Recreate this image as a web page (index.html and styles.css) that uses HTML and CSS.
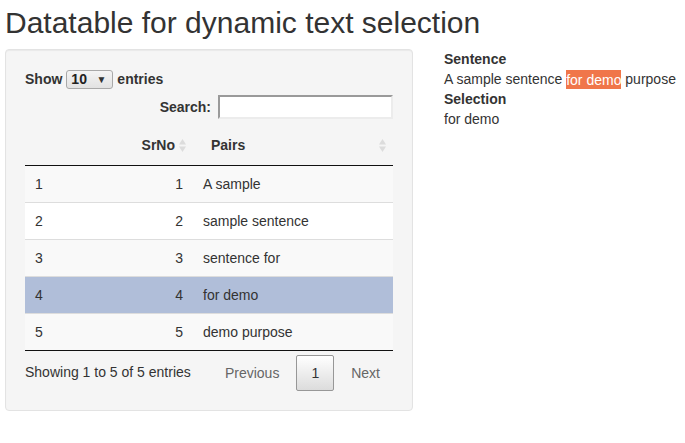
FILE: index.html
```html
<!DOCTYPE html>
<html>
<head>
<meta charset="utf-8">
<link rel="stylesheet" href="styles.css">
</head>
<body>
<div class="page">
  <h2 class="title">Datatable for dynamic text selection</h2>
  <div class="main">
    <div class="well">
      <div class="dt-length">
        <span class="lbl">Show</span>
        <div class="fake-select"><span class="sel-val">10</span><span class="sel-arrow">▼</span></div>
        <span class="lbl">entries</span>
      </div>
      <div class="dt-filter">
        <span class="lbl">Search:</span>
        <input class="search" type="text">
      </div>
      <table class="dt">
        <colgroup>
          <col class="c1"><col class="c2"><col class="c3">
        </colgroup>
        <thead>
          <tr>
            <th class="h-empty"></th>
            <th class="h-right sortable">SrNo<svg class="sort" width="7" height="13" viewBox="0 0 7 13"><polygon points="3.5,0 7,5.5 0,5.5" fill="#dcdcdc"/><polygon points="0,7.5 7,7.5 3.5,13" fill="#dcdcdc"/></svg></th>
            <th class="h-left sortable">Pairs<svg class="sort" width="7" height="13" viewBox="0 0 7 13"><polygon points="3.5,0 7,5.5 0,5.5" fill="#dcdcdc"/><polygon points="0,7.5 7,7.5 3.5,13" fill="#dcdcdc"/></svg></th>
          </tr>
        </thead>
        <tbody>
          <tr class="odd"><td>1</td><td class="r">1</td><td>A sample</td></tr>
          <tr class="even"><td>2</td><td class="r">2</td><td>sample sentence</td></tr>
          <tr class="odd"><td>3</td><td class="r">3</td><td>sentence for</td></tr>
          <tr class="selected"><td>4</td><td class="r">4</td><td>for demo</td></tr>
          <tr class="odd"><td>5</td><td class="r">5</td><td>demo purpose</td></tr>
        </tbody>
      </table>
      <div class="dt-footer">
        <div class="dt-info">Showing 1 to 5 of 5 entries</div>
        <div class="dt-paginate">
          <span class="pbtn disabled">Previous</span>
          <span class="pbtn current">1</span>
          <span class="pbtn disabled">Next</span>
        </div>
      </div>
    </div>
    <div class="side">
      <div class="strong">Sentence</div>
      <div>A sample sentence <span class="hl">for demo</span> purpose</div>
      <div class="strong">Selection</div>
      <div>for demo</div>
    </div>
  </div>
</div>
</body>
</html>
```
FILE: styles.css
```css
html, body {
  margin: 0;
  padding: 0;
  background: #fff;
}
body {
  font-family: "Liberation Sans", Arial, Helvetica, sans-serif;
  font-size: 14px;
  line-height: 20px;
  color: #333;
}
.page {
  padding: 6px 0 0 5px;
}
.title {
  margin: 0 0 10px 0;
  font-size: 30px;
  font-weight: 500;
  line-height: 33px;
  color: #333;
}
.main {
  display: flex;
  align-items: flex-start;
  gap: 31px;
}
.well {
  box-sizing: border-box;
  width: 408px;
  padding: 19px;
  background: #f5f5f5;
  border: 1px solid #e3e3e3;
  border-radius: 4px;
  box-shadow: inset 0 1px 1px rgba(0,0,0,0.05);
}
.lbl {
  font-weight: 700;
}
.dt-length {
  display: flex;
  align-items: center;
  height: 20px;
}
.fake-select {
  box-sizing: border-box;
  width: 47px;
  height: 19px;
  margin: 0 4px 0 4px;
  padding: 0 6px 0 4px;
  display: flex;
  align-items: center;
  justify-content: space-between;
  border: 1px solid #a9a9a9;
  border-radius: 3px;
  background: linear-gradient(#f4f4f4, #e2e2e2);
  font-weight: 700;
  color: #222;
}
.sel-val {
  font-size: 14px;
  line-height: 17px;
}
.sel-arrow {
  font-size: 10px;
  line-height: 17px;
  color: #333;
}
.dt-filter {
  margin-top: 6px;
  display: flex;
  justify-content: flex-end;
  align-items: center;
  gap: 7px;
}
.search {
  box-sizing: border-box;
  width: 175px;
  height: 24px;
  margin: 0;
  padding: 0 3px;
  background: #fff;
  border-top: 2px solid #9a9a9a;
  border-left: 2px solid #9a9a9a;
  border-right: 2px solid #ececec;
  border-bottom: 2px solid #ececec;
  border-radius: 0;
  outline: none;
}
.dt {
  margin-top: 6px;
  width: 368px;
  border-collapse: separate;
  border-spacing: 0;
  table-layout: fixed;
  border-bottom: 1px solid #111;
}
.c1 { width: 80px; }
.c2 { width: 88px; }
.c3 { width: 200px; }
.dt th {
  position: relative;
  padding: 10px 18px;
  font-weight: 700;
  border-bottom: 1px solid #111;
  line-height: 20px;
}
.h-right { text-align: right; }
.h-left { text-align: left; }
.sort {
  position: absolute;
  right: 7px;
  top: 14px;
}
.dt td {
  padding: 8px 10px;
  line-height: 20px;
  border-top: 1px solid #ddd;
  white-space: nowrap;
}
.dt tbody tr:first-child td {
  border-top: none;
}
.dt td.r { text-align: right; }
.odd td { background: #f9f9f9; }
.even td { background: #fff; }
.selected td { background: #b0bed9; }
.dt-footer {
  display: flex;
  justify-content: space-between;
  align-items: flex-start;
}
.dt-info {
  padding-top: 10.5px;
}
.dt-paginate {
  padding-top: 3.5px;
  margin-right: -2px;
  display: flex;
}
.pbtn {
  box-sizing: border-box;
  display: inline-block;
  min-width: 21px;
  padding: 7px 14px;
  margin-left: 2px;
  border: 1px solid transparent;
  border-radius: 2px;
  text-align: center;
  line-height: 20px;
}
.pbtn.disabled {
  color: #666;
}
.pbtn.current {
  color: #333;
  border: 1px solid #979797;
  background: linear-gradient(#fff, #dcdcdc);
}
.side {
  padding-top: 0;
  line-height: 20px;
}
.strong {
  font-weight: 700;
}
.hl {
  background: #f0764a;
  color: #fff;
  padding: 1.5px 0;
}
```
